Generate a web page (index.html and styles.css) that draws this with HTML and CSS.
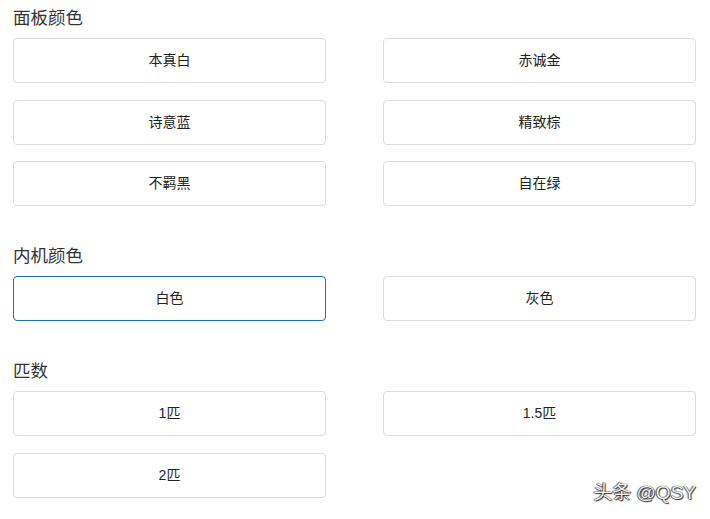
FILE: index.html
```html
<!DOCTYPE html>
<html lang="zh-CN">
<head>
<meta charset="utf-8">
<title>选项</title>
<link rel="stylesheet" href="styles.css">
</head>
<body>
<main class="page">
  <section class="group">
    <h2 class="group-title">面板颜色</h2>
    <div class="options">
      <button class="opt">本真白</button>
      <button class="opt">赤诚金</button>
      <button class="opt">诗意蓝</button>
      <button class="opt">精致棕</button>
      <button class="opt">不羁黑</button>
      <button class="opt">自在绿</button>
    </div>
  </section>
  <section class="group">
    <h2 class="group-title">内机颜色</h2>
    <div class="options">
      <button class="opt opt-selected">白色</button>
      <button class="opt">灰色</button>
    </div>
  </section>
  <section class="group">
    <h2 class="group-title">匹数</h2>
    <div class="options">
      <button class="opt">1匹</button>
      <button class="opt">1.5匹</button>
      <button class="opt">2匹</button>
    </div>
  </section>
</main>
<div class="watermark">头条 @QSY</div>
</body>
</html>
```
FILE: styles.css
```css
html, body {
  margin: 0;
  padding: 0;
  background: #ffffff;
}
body {
  font-family: "Liberation Sans", "Noto Sans CJK SC", sans-serif;
  width: 710px;
  height: 519px;
  overflow: hidden;
  position: relative;
}
.page {
  padding: 0 14px 0 13px;
}
.group {
  margin-bottom: 32px;
}
.group-title {
  margin: 0 0 8px 0;
  padding-top: 4px;
  font-family: "Noto Sans CJK SC", sans-serif;
  font-size: 17.5px;
  line-height: 26px;
  font-weight: 400;
  color: #333333;
}
.options {
  display: grid;
  grid-template-columns: 313px 313px;
  column-gap: 57px;
  row-gap: 16.5px;
}
.opt {
  height: 45px;
  margin: 0;
  padding: 0 0 3px 0;
  background: #ffffff;
  border: 1px solid #dcdcdc;
  border-radius: 4px;
  font-family: "Liberation Sans", "Noto Sans CJK SC", sans-serif;
  font-size: 14px;
  color: #222222;
  text-align: center;
}
.opt-selected {
  border-color: #1b72b3;
}
.watermark {
  position: absolute;
  right: 14px;
  bottom: 15px;
  font-family: "Liberation Sans", "Noto Sans CJK SC", sans-serif;
  font-size: 19px;
  line-height: 22px;
  color: #f4f4f4;
  text-shadow: 0 0 1px #000, 1px 1px 1px rgba(0,0,0,0.8), -1px 0 1px rgba(0,0,0,0.6);
}
```
